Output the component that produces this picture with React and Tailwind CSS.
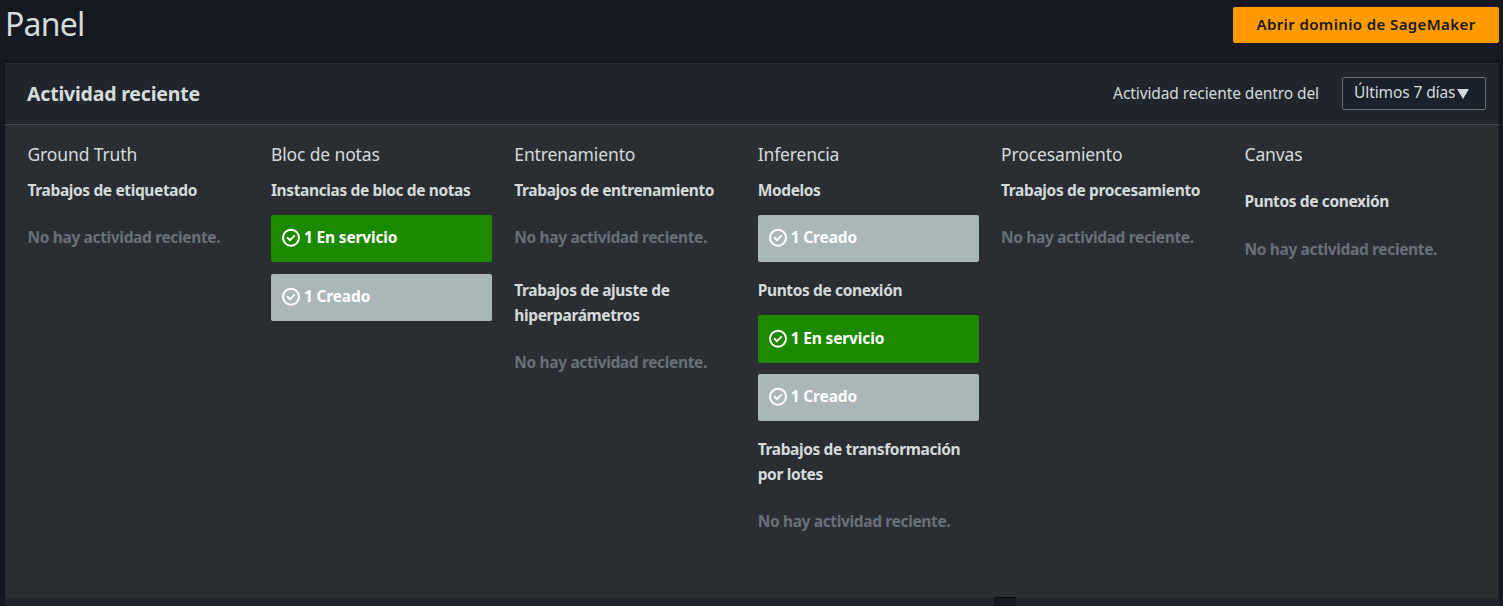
const IDLE = 'No hay actividad reciente.';

function CheckIcon() {
  return (
    <svg className="size-5 shrink-0" viewBox="0 0 20 20" fill="none" stroke="currentColor" strokeWidth="2">
      <circle cx="10" cy="9.7" r="8" />
      <path d="M6 9.2 9 12.2l4.8-4.8" />
    </svg>
  );
}

function Heading({ children, className = '' }) {
  return <h3 className={`text-[15.5px] leading-[25px] font-bold tracking-[-0.37px] whitespace-pre-line text-[#d5dbdb] ${className}`}>{children}</h3>;
}

function Idle({ className = '' }) {
  return <p className={`text-[15.5px] leading-[25px] font-bold tracking-[-0.35px] whitespace-nowrap text-[#687078] ${className}`}>{IDLE}</p>;
}

function Status({ children, green = false, className = '' }) {
  return (
    <div className={`flex h-[47px] items-center gap-[3px] rounded-xs pb-px pl-[10px] text-[15.5px] font-bold tracking-[-0.15px] text-white ${green ? 'bg-[#1d8900]' : 'bg-[#aab7b8]'} ${className}`}>
      <CheckIcon />
      <span>{children}</span>
    </div>
  );
}

function Column({ title, children }) {
  return (
    <section className="flex w-[221px] shrink-0 flex-col">
      <h2 className="h-[38px] text-[17.5px] leading-7 tracking-[-0.13px] text-[#d5dbdb]">{title}</h2>
      {children}
    </section>
  );
}

export default function App() {
  return (
    <div className="flex h-[606px] w-[1503px] flex-col overflow-hidden bg-[#161920] font-['Noto_Sans',sans-serif]">
      <header className="flex h-[63px] shrink-0 items-start justify-between pr-1 pl-[5px]">
        <h1 className="text-[32px] leading-[48px] tracking-[-0.8px] text-[#d5dbdb]">Panel</h1>
        <button className="mt-[7px] h-9 w-[266px] rounded-xs bg-[#ff9900] pb-[2px] text-[15px] font-semibold tracking-[0.39px] text-[#16191f]">
          Abrir dominio de SageMaker
        </button>
      </header>

      <main className="mr-1 ml-[5px] flex h-[535px] shrink-0 flex-col bg-[#2a2e33] shadow-[0_0_2px_0_#0b0d11]">
        <div className="flex h-[62px] shrink-0 items-center justify-between border-t border-b border-t-[#2a2e33] border-b-[#414750] bg-[#21252c] pr-[13px] pl-[22px]">
          <h2 className="text-[19.5px] font-bold tracking-[-0.2px] text-[#d5dbdb]">Actividad reciente</h2>
          <div className="flex items-center gap-[23px] text-[#d5dbdb]">
            <span className="text-[15.5px] tracking-[-0.1px]">Actividad reciente dentro del</span>
            <button className="-mt-px flex h-[33px] w-[144px] items-center gap-[2px] rounded-xs border border-[#687078] bg-[#1a202c] pb-px pl-[11px] text-[15.5px] tracking-[-0.1px]">
              <span>Últimos 7 días</span>
              <svg className="mt-[2px] h-[10px] w-3" viewBox="0 0 12 10" fill="currentColor">
                <path d="M0 0h12L6 10z" />
              </svg>
            </button>
          </div>
        </div>

        <div className="flex gap-[22.4px] pt-[15px] pl-[22.5px]">
          <Column title="Ground Truth">
            <Heading>Trabajos de etiquetado</Heading>
            <Idle className="mt-[22px]" />
          </Column>
          <Column title="Bloc de notas">
            <Heading>Instancias de bloc de notas</Heading>
            <Status green className="mt-3">1 En servicio</Status>
            <Status className="mt-3">1 Creado</Status>
          </Column>
          <Column title="Entrenamiento">
            <Heading>Trabajos de entrenamiento</Heading>
            <Idle className="mt-[22px]" />
            <Heading className="mt-7">{'Trabajos de ajuste de\nhiperparámetros'}</Heading>
            <Idle className="mt-[22px]" />
          </Column>
          <Column title="Inferencia">
            <Heading>Modelos</Heading>
            <Status className="mt-3">1 Creado</Status>
            <Heading className="mt-4">Puntos de conexión</Heading>
            <Status green className="mt-3 !h-12">1 En servicio</Status>
            <Status className="mt-[11px]">1 Creado</Status>
            <Heading className="mt-4">{'Trabajos de transformación\npor lotes'}</Heading>
            <Idle className="mt-[22px]" />
          </Column>
          <Column title="Procesamiento">
            <Heading>Trabajos de procesamiento</Heading>
            <Idle className="mt-[22px]" />
          </Column>
          <Column title="Canvas">
            <Heading className="mt-[11px]">Puntos de conexión</Heading>
            <Idle className="mt-[23px]" />
          </Column>
        </div>
      </main>

      <footer className="mr-1 ml-[5px] flex h-2 shrink-0 bg-[#21252c]">
        <div className="ml-[989px] -mt-px h-[9px] w-[22px] border-t border-[#08090c] bg-[#161920]" />
      </footer>
    </div>
  );
}
